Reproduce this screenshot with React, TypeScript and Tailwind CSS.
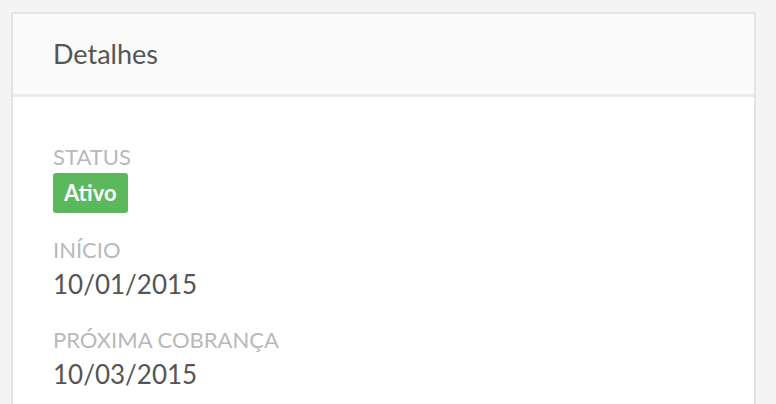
export default function App() {
  return (
    <div className="h-screen overflow-hidden bg-[#f4f4f4] pt-3 pl-[11px] pr-5 font-['Lato',sans-serif]">
      <div className="h-[400px] rounded-[3px] border-2 border-[#e3e3e3] bg-white">
        <div className="h-[83px] border-b-[3px] border-[#ebebeb] bg-[#fafafa] pl-10 pt-[24px]">
          <h2 className="text-[27px] leading-[32px] text-[#555]">Detalhes</h2>
        </div>
        <div className="px-10 pt-[47px]">
          <div className="text-[22px] leading-[26px] uppercase text-[#b9b9b9]">Status</div>
          <span className="mt-[3px] inline-block h-[40px] rounded-[3px] bg-[#5cb85c] px-[11px] pt-[8px] text-[22px] font-bold leading-[24px] text-white">
            Ativo
          </span>
          <div className="mt-[24px] text-[22px] leading-[26px] uppercase text-[#b9b9b9]">Início</div>
          <div className="mt-[6px] text-[26px] leading-[30px] text-[#555]">10/01/2015</div>
          <div className="mt-[28px] text-[22px] leading-[26px] uppercase text-[#b9b9b9]">Próxima cobrança</div>
          <div className="mt-[6px] text-[26px] leading-[30px] text-[#555]">10/03/2015</div>
        </div>
      </div>
    </div>
  );
}
